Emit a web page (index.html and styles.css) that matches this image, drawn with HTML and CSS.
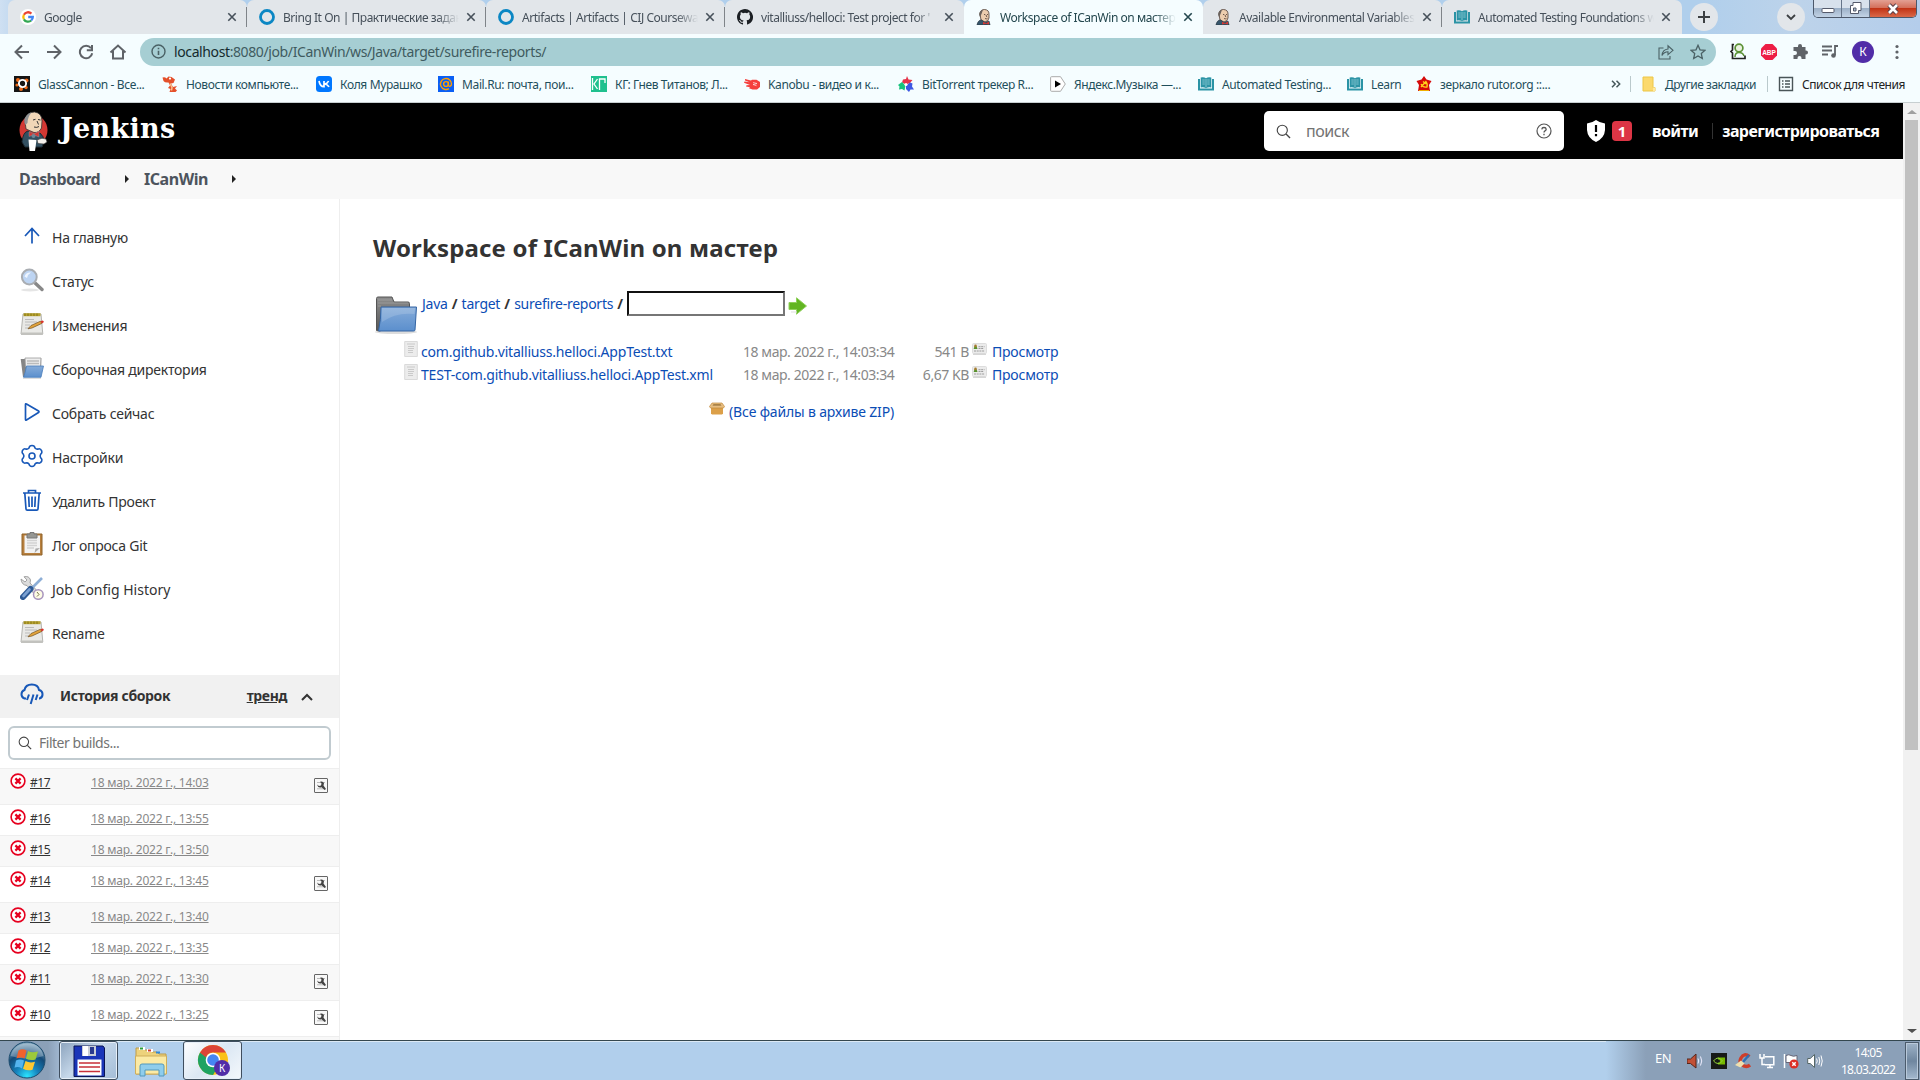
FILE: index.html
```html
<!DOCTYPE html>
<html lang="ru">
<head>
<meta charset="utf-8">
<title>Workspace of ICanWin on мастер</title>
<link rel="stylesheet" href="styles.css">
</head>
<body>
<svg class="defs" aria-hidden="true">
  <defs>
    <linearGradient id="gBlue" x1="0" y1="0" x2="0" y2="1"><stop offset="0" stop-color="#86acd9"/><stop offset="1" stop-color="#5b8fcd"/></linearGradient>
    <linearGradient id="gGrey" x1="0" y1="0" x2="0" y2="1"><stop offset="0" stop-color="#8e8e8e"/><stop offset="1" stop-color="#555"/></linearGradient>
    <radialGradient id="gOrb" cx=".5" cy=".95" r=".9"><stop offset="0" stop-color="#2be5ff"/><stop offset=".35" stop-color="#1583bd"/><stop offset=".7" stop-color="#134a78"/><stop offset="1" stop-color="#7fa4bd"/></radialGradient>
    <symbol id="google" viewBox="0 0 16 16"><circle cx="8" cy="8" r="8" fill="#fff"/><g fill="none" stroke-width="2.3"><path d="M11.4 4.6A4.8 4.8 0 0 0 3.9 5.7" stroke="#ea4335"/><path d="M3.9 5.7A4.8 4.8 0 0 0 3.9 10.3" stroke="#fbbc05"/><path d="M3.9 10.3A4.8 4.8 0 0 0 11.2 11.5" stroke="#34a853"/><path d="M11.2 11.5A4.8 4.8 0 0 0 12.8 8H8.2" stroke="#4285f4"/></g></symbol>
    <symbol id="ring" viewBox="0 0 16 16"><circle cx="8" cy="8" r="6.5" fill="none" stroke="#0b87c4" stroke-width="2.8"/></symbol>
    <symbol id="github" viewBox="0 0 16 16"><path fill="#1b1f23" d="M8 0C3.58 0 0 3.58 0 8c0 3.54 2.29 6.53 5.47 7.59.4.07.55-.17.55-.38v-1.49c-2.01.37-2.53-.49-2.69-.94-.09-.23-.48-.94-.82-1.13-.28-.15-.68-.52-.01-.53.63-.01 1.08.58 1.23.82.72 1.21 1.87.87 2.33.66.07-.52.28-.87.51-1.07-1.78-.2-3.64-.89-3.64-3.95 0-.87.31-1.59.82-2.15-.08-.2-.36-1.02.08-2.12 0 0 .67-.21 2.2.82a7.6 7.6 0 0 1 4 0c1.53-1.04 2.2-.82 2.2-.82.44 1.1.16 1.92.08 2.12.51.56.82 1.27.82 2.15 0 3.07-1.87 3.75-3.65 3.95.29.25.54.73.54 1.48v2.2c0 .21.15.46.55.38A8 8 0 0 0 8 0"/></symbol>
    <symbol id="butler" viewBox="0 0 16 16"><path d="M4 5Q4 .6 8.5 .5Q13 .8 13 5V9Q12.500 12 9 13L5 11Z" fill="#eccdae" stroke="#4c3a32" stroke-width=".8"/><path d="M4 8Q2.300 5 4 3Q5 1 7 .8L5.500 5Z" fill="#6a625c"/><path d="M8 5.500h1.300M11 5.500h1M9 9.500q1.500.8 2.500-.2M10 6l.8 2" stroke="#4c3a32" stroke-width=".8" fill="none"/><path d="M1 16Q2 11 5.500 11L9 13.500L13 12L14 16Z" fill="#36566b" stroke="#263540" stroke-width=".7"/><path d="M7 12.800l3 1.400 3-1.600v3l-3-.8-3 .8Z" fill="#d33833"/></symbol>
    <symbol id="book" viewBox="0 0 16 16"><path d="M0 3h2v9.500h12V3h2v11.500H0Z" fill="#2b93a5"/><path d="M2.700 1.500Q6 .8 8 2.200Q10 .8 13.300 1.500V11.500Q10 11 8 12.200Q6 11 2.700 11.500Z" fill="#2b93a5"/><path d="M8 3v8.500M4.300 4h2.500M4.300 6h2.500M4.300 8h2.500M9.200 4h2.500M9.200 6h2.500M9.200 8h2.500" stroke="#a9dbe2" stroke-width=".7"/></symbol>
    <symbol id="glass" viewBox="0 0 16 16"><path d="M0 0h16v16H0z" fill="#151515"/><g fill="#ef6a18"><circle cx="4" cy="4" r="2"/><circle cx="12.500" cy="4.500" r="2"/><circle cx="3" cy="9" r="1.600"/><circle cx="7" cy="13" r="2"/><circle cx="12" cy="11.500" r="1.700"/></g><circle cx="8.500" cy="7.500" r="3.600" fill="#151515" stroke="#fff" stroke-width="1.900"/></symbol>
    <symbol id="dragon" viewBox="0 0 16 16"><path d="M.5 1.500Q3 .5 4.500 2.500L6.500.5 9.500 1 13 3.500 11.500 7 9 7.500 11 11l4-1-2 2.500 2 2-1.500 1.500H7.500L8.500 13 6 12l2-2.500L6.500 6.500Q3 7 1.500 5Z" fill="#e4502b"/><path d="M8 7.500l2 4-.5 3" stroke="#f9c48e" stroke-width="1.500" fill="none"/><circle cx="8" cy="2.600" r="1.100" fill="#fff"/></symbol>
    <symbol id="vk" viewBox="0 0 16 16"><rect width="16" height="16" rx="3.500" fill="#07f"/><path d="M3 5Q4 10.500 8 10.700V5M12.600 5Q11.500 7.500 8.500 8Q11.500 8.200 13 10.900" stroke="#fff" stroke-width="1.700" fill="none"/></symbol>
    <symbol id="mailru" viewBox="0 0 16 16"><path d="M0 0h16v16H0z" fill="#0a5ff5"/><circle cx="8" cy="8" r="2.400" fill="none" stroke="#ff9e00" stroke-width="1.400"/><path d="M10.400 5.500V9q.2 1.500 1.500 1.400Q13.500 9.800 13.500 8A5.500 5.500 0 1 0 11 12.600" fill="none" stroke="#ff9e00" stroke-width="1.400"/></symbol>
    <symbol id="kg" viewBox="0 0 16 16"><path d="M0 0h16v16H0z" fill="#1fc08e"/><path d="M1.500 2v12M6.500 3 3 8l3.500 5M8.500 14V3H14v4" fill="none" stroke="#fff" stroke-width="1.300"/></symbol>
    <symbol id="kanobu" viewBox="0 0 16 16"><path d="M1 3l6 1.500 1-.8h4.500L16 6v5l-3 2.500H8.500L5 12.300l1-1.100-4-.7.500-1.300L6 9 0 6.800.5 5.500l5 .8L1 4.500Z" fill="#f5403d"/><path d="M9 6.500l4 1-4 1 3.500 1.200" stroke="#fff" stroke-width=".6" fill="none"/></symbol>
    <symbol id="rutracker" viewBox="0 0 16 16"><path d="M9 0l1.500 3.500 4 .5-2.500 3-4 1.500-4-2L5 3.500 8 3Z" fill="#e5344a"/><path d="M0 9l4-3 3.500 3.500-1 5L4 13l-3 .5.500-3Z" fill="#18c37d"/><path d="M8 9.500l4-3 2.500 1-.5 3 2 3-3.500 0-1.500 2.500-3-3Z" fill="#3d58e3"/><circle cx="8" cy="8.500" r="1.500" fill="#fff"/></symbol>
    <symbol id="ymusic" viewBox="0 0 16 16"><path d="M1.500.7h9L15.300 8l-4.800 7.300h-9Q.6 15.300.6 14.400V1.600Q.6.7 1.500.7Z" fill="#fff" stroke="#aaa"/><path d="M5 4.500 11 8l-6 3.500Z" fill="#000"/></symbol>
    <symbol id="rutor" viewBox="0 0 16 16"><path d="M8 0l2.500 3.500L15.500 5 13 9l1 6H2l1-6L.5 5l5-1.500Z" fill="#d50909"/><path d="M5 11l4.500-5M7 5.500l3 2.500M5 8q2 4 6 3 1-3-1.500-6" stroke="#ffd21b" stroke-width="1.300" fill="none"/><path d="M3 14.500h10" stroke="#f0b000"/></symbol>
    <symbol id="x" viewBox="0 0 10 10"><path d="M1.300 1.300l7.400 7.400M8.700 1.300 1.300 8.700" stroke="currentColor" stroke-width="1.600"/></symbol>
    <symbol id="lens" viewBox="0 0 16 16"><circle cx="6.700" cy="6.700" r="5.400" fill="none" stroke="currentColor" stroke-width="1.200"/><path d="M10.700 10.700 15 15" stroke="currentColor" stroke-width="1.400"/></symbol>
    <symbol id="notepad" viewBox="0 0 24 24"><path d="M3 2h18l1.800 20H1Z" fill="#e9e9e6" stroke="#b4b4b0"/><path d="M1 20.500h21.800V23H1Z" fill="#c2c2be"/><path d="M3.500 1.200h17v3h-17z" fill="#b7a332"/><path d="M5 1.500v2.500M8 1.500v2.500M11 1.500v2.500M14 1.500v2.500M17 1.500v2.500" stroke="#857410"/><path d="M5 7.500h9M5 10h12M5 13h5M5 16h4" stroke="#bbb"/><path d="M8 16.800l3-3.300 9.500-4.300 1.300 2.200-9.800 4.600Z" fill="#e3a43c" stroke="#71501f" stroke-width=".7"/><path d="M20.500 9.200l2-.8q1.600.3 1.200 1.800l-1.900 1.200Z" fill="#d9332b"/></symbol>
    <symbol id="folder" viewBox="0 0 24 24"><path d="M.7 3h4l.5-.8h16V10H21v11H3Z" fill="#858585"/><path d="M5 2h16l-.5 9h-15Z" fill="#eee" stroke="#999" stroke-width=".8"/><path d="M7 5h12M7 7.500h12" stroke="#bbb" stroke-width="1.300"/><path d="M6.500 10H23.500L21 21.300H3.500Q5.300 17 6.500 10Z" fill="url(#gBlue)" stroke="#4a7dbb" stroke-width=".8"/><path d="M3 22.500h18" stroke="#ddd"/></symbol>
    <symbol id="fail" viewBox="0 0 16 16"><circle cx="8" cy="8" r="6.900" fill="#fff" stroke="#e6001f" stroke-width="1.600"/><path d="M5.400 5.400l5.200 5.200M10.600 5.400l-5.200 5.200" stroke="#e6001f" stroke-width="2.200"/></symbol>
    <symbol id="wrench" viewBox="0 0 14 15"><rect x=".5" y=".5" width="13" height="14" rx=".5" fill="#f8f8f8" stroke="#666"/><path d="M3 4.500h8M3 10.800h8" stroke="#bbb"/><path d="M3 6.500l2 1.500 2-.5.500-2L6 3.700q3-1 4 1.500l-.5 2.300 2.500 3.500-1.300 1L7.500 9.200Q4 10.500 3 6.500Z" fill="#444"/></symbol>
    <symbol id="textfile" viewBox="0 0 14 16"><path d="M.7.500h12.600v15H.7Z" fill="#ececec" stroke="#dadada"/><path d="M3 3h8M4 5.500h6M4 7.500h6M4 9.500h5M4 11.500h5" stroke="#c6c6c6" stroke-width=".9"/></symbol>
    <symbol id="card" viewBox="0 0 15 12"><rect x=".5" y=".5" width="14" height="10" rx="1" fill="#ebebeb" stroke="#ddd"/><path d="M1 11.300h13" stroke="#ccc"/><path d="M1.700 6l.8-3h2l1 3Z" fill="#57912d"/><circle cx="3.500" cy="2.900" r="1.300" fill="#a57a2d"/><path d="M6.500 3.700h6M6.500 5.500h5M2 8h10.500" stroke="#888" stroke-width=".8" stroke-dasharray="2 .7"/></symbol>
  </defs>
</svg>

<div class="browser">
  <header class="tabs">
    <div class="tab"><svg class="fav"><use href="#google"/></svg><span class="label">Google</span><svg class="close"><use href="#x"/></svg></div>
    <div class="tab"><svg class="fav"><use href="#ring"/></svg><span class="label">Bring It On | Практические задан</span><svg class="close"><use href="#x"/></svg></div>
    <div class="tab"><svg class="fav"><use href="#ring"/></svg><span class="label">Artifacts | Artifacts | CIJ Coursewa</span><svg class="close"><use href="#x"/></svg></div>
    <div class="tab before-active"><svg class="fav"><use href="#github"/></svg><span class="label">vitalliuss/helloci: Test project for '</span><svg class="close"><use href="#x"/></svg></div>
    <div class="tab active"><svg class="fav"><use href="#butler"/></svg><span class="label">Workspace of ICanWin on мастер</span><svg class="close"><use href="#x"/></svg></div>
    <div class="tab after-active"><svg class="fav"><use href="#butler"/></svg><span class="label">Available Environmental Variables</span><svg class="close"><use href="#x"/></svg></div>
    <div class="tab last"><svg class="fav"><use href="#book"/></svg><span class="label">Automated Testing Foundations w</span><svg class="close"><use href="#x"/></svg></div>
    <div class="strip">
      <span class="round"><svg width="14" height="14" viewBox="0 0 14 14"><path d="M7 1v12M1 7h12" stroke="#3c4043" stroke-width="2"/></svg></span>
      <span class="round search"><svg width="10" height="7" viewBox="0 0 10 7"><path d="M1 1l4 4 4-4" fill="none" stroke="#3c4043" stroke-width="1.800"/></svg></span>
      <div class="winctl">
        <span><svg width="14" height="18" viewBox="0 0 14 18"><rect x="1" y="8.500" width="12" height="4" rx="1" fill="#fff" stroke="#555a6b"/></svg></span>
        <span><svg width="13" height="18" viewBox="0 0 13 18"><path d="M4 2.500h8v8H9.500v3h-8v-8H4Z" fill="#fff" stroke="#555a6b"/><path d="M4.500 8h2.500v3H4.500Z" fill="#a9bccf" stroke="#555a6b"/></svg></span>
        <span class="kill"><svg width="14" height="16" viewBox="0 0 14 16"><path d="M3 4l8 8M11 4l-8 8" stroke="#5b4048" stroke-width="4.600"/><path d="M3 4l8 8M11 4l-8 8" stroke="#fff" stroke-width="2.600"/></svg></span>
      </div>
    </div>
  </header>

  <div class="toolbar">
    <div class="nav">
      <svg width="16" height="16" viewBox="0 0 16 16"><path d="M15 8H2.500M8 1.500 1.500 8 8 14.500" /></svg>
      <svg width="16" height="16" viewBox="0 0 16 16"><path d="M1 8h12.500M8 1.500 14.500 8 8 14.500"/></svg>
      <svg width="16" height="16" viewBox="0 0 16 16"><path d="M13 4.200A6.200 6.200 0 1 0 14.200 9.200M14 1v5.200H8.800"/></svg>
      <svg class="home" width="18" height="16" viewBox="0 0 18 16"><path d="M1.500 8.500 9 1.500l7.500 7M4 7v7.500h10V7"/></svg>
    </div>
    <div class="omnibox">
      <svg width="15" height="15" viewBox="0 0 15 15"><circle cx="7.500" cy="7.500" r="6.500" fill="none" stroke="#4a6165" stroke-width="1.400"/><path d="M7.500 6.700v4.300M7.500 3.700v1.600" stroke="#4a6165" stroke-width="1.600"/></svg>
      <span class="url"><b>localhost</b>:8080/job/ICanWin/ws/Java/target/surefire-reports/</span>
      <svg width="16" height="16" viewBox="0 0 16 16"><path d="M5.500 4H1v11h11v-3M4 11.500q.5-6 6-6.500V1.800L15 6.300l-5 4.300V7.800Q6 8 4 11.500Z" fill="none" stroke="#4a6165" stroke-width="1.100"/></svg>
      <svg width="16" height="16" viewBox="0 0 16 16"><path d="M8 1.300l2 4.500 5 .5-3.700 3.300 1 4.900L8 12l-4.300 2.500 1-4.900L1 6.300l5-.5Z" fill="none" stroke="#4a6165" stroke-width="1.300"/></svg>
    </div>
    <div class="exts">
      <svg width="16" height="17" viewBox="0 0 16 17"><path d="M4 1.500H2.500v5.500L1 8.500l1.500 1.500v5.500H15v-3" fill="none" stroke="#222" stroke-width="1.700"/><circle cx="9" cy="5" r="3.900" fill="#e9f2df" stroke="#5b9136" stroke-width="1.700"/><path d="M5 14q0-4.500 4-4.500t5 3.500" fill="none" stroke="#5b9136" stroke-width="1.500"/></svg>
      <svg width="18" height="18" viewBox="0 0 18 18"><path d="M5.500 1h7L17 5.500v7L12.500 17h-7L1 12.500v-7Z" fill="#ed1e45"/><text x="9" y="11.500" text-anchor="middle" class="abp">ABP</text></svg>
      <svg width="16" height="16" viewBox="0 0 16 16"><path d="M6 2a2 2 0 0 1 4 0v1h3.500v3.500h.5a2 2 0 0 1 0 4h-.5V15H9.500v-1a2 2 0 0 0-4 0v1H1.500v-4H3a2 2 0 0 0 0-4H1.500V3H6Z" fill="#5f6368"/></svg>
      <svg width="16" height="16" viewBox="0 0 16 16"><path d="M0 2.500h10M0 6.500h10M0 10.500h6M16 2h-3v9" fill="none" stroke="#5f6368" stroke-width="1.800"/><circle cx="11.500" cy="11.500" r="2.300" fill="#5f6368"/></svg>
      <span class="avatar">К</span>
      <svg width="4" height="16" viewBox="0 0 4 16"><circle cx="2" cy="2.500" r="1.600" fill="#5f6368"/><circle cx="2" cy="8" r="1.600" fill="#5f6368"/><circle cx="2" cy="13.500" r="1.600" fill="#5f6368"/></svg>
    </div>
  </div>

  <nav class="bookmarks">
    <a><svg><use href="#glass"/></svg>GlassCannon - Все...</a>
    <a><svg><use href="#dragon"/></svg>Новости компьюте...</a>
    <a><svg><use href="#vk"/></svg>Коля Мурашко</a>
    <a><svg><use href="#mailru"/></svg>Mail.Ru: почта, пои...</a>
    <a><svg><use href="#kg"/></svg>КГ: Гнев Титанов; Л...</a>
    <a><svg><use href="#kanobu"/></svg>Kanobu - видео и к...</a>
    <a><svg><use href="#rutracker"/></svg>BitTorrent трекер R...</a>
    <a><svg><use href="#ymusic"/></svg>Яндекс.Музыка —...</a>
    <a><svg><use href="#book"/></svg>Automated Testing...</a>
    <a><svg><use href="#book"/></svg>Learn</a>
    <a><svg><use href="#rutor"/></svg>зеркало rutor.org ::...</a>
    <a class="more"><svg viewBox="0 0 10 8"><path d="M1 .8 4.200 4 1 7.200M5.500.8 8.700 4 5.500 7.200" fill="none" stroke="#46585b" stroke-width="1.500"/></svg></a>
    <a class="rule other"><svg viewBox="0 0 16 16"><path d="M2 1h10v10.500h2V15H2Z" fill="#fbd96d" stroke="#edc647"/><path d="M12 11.500h2V15h-2z" fill="#ffe89b"/></svg>Другие закладки</a>
    <a class="rule reading"><svg viewBox="0 0 16 16"><path d="M1.500 1.500h13v13h-13Z" fill="none" stroke="#4a5558" stroke-width="1.400"/><path d="M4 5h1.500M4 8h1.500M4 11h1.500M7 5h5M7 8h5M7 11h5" stroke="#4a5558" stroke-width="1.400"/></svg>Список для чтения</a>
  </nav>

  <div class="viewport">
    <div class="page">
      <header class="jenkins">
        <svg class="mascot" width="30" height="40" viewBox="0 0 30 40"><ellipse cx="14.500" cy="19" rx="14" ry="15" fill="#d33833"/><path d="M6 10Q7 1 15.500 1Q23 2 23 10L22.500 17Q20 22 15 21.500L7 18Z" fill="#f0d6b7" stroke="#333" stroke-width=".8"/><path d="M6.500 14Q3.500 9 7.500 4.500Q9.500 2 12.500 1.500Q8.500 6 8.500 12Z" fill="#8f9395"/><path d="M14 9l2.500-.7M19 8.500l2.500.5M15 16q3 1 5-.5M18 10l1.500 3.500" stroke="#333" fill="none"/><path d="M3 31Q4 21 9 20l6 4 6-2q4 3 4 9l-2 5H6Z" fill="#335061" stroke="#1d2a33"/><path d="M10 20.500l5 2.500 5-3v6l-5-2-5 1.500Z" fill="#d33833" stroke="#81b0c4" stroke-width=".4"/><circle cx="14.500" cy="25" r="2" fill="#6d8797"/><path d="M9.500 28.500l8 .5-1.500 11h-5.500Z" fill="#fff"/><path d="M18 29q5-3 9-1l1 3-3 2-6-.5Z" fill="#f4f0eb" stroke="#333" stroke-width=".6"/></svg>
        <span class="wordmark">Jenkins</span>
        <div class="searchbox"><svg width="15" height="15"><use href="#lens"/></svg><span>поиск</span><svg width="16" height="16" viewBox="0 0 16 16"><circle cx="8" cy="8" r="7" fill="none" stroke="#555" stroke-width="1.200"/><path d="M5.800 6.400Q6 4.500 8 4.500T10.200 6.300Q10.200 7.300 9 7.900Q8 8.400 8 9.600M8 10.800v1.400" fill="none" stroke="#555" stroke-width="1.300"/></svg></div>
        <svg class="shield" width="18" height="22" viewBox="0 0 18 22"><path d="M9 0Q13 3 18 3.500V10Q17.500 18 9 22Q.5 18 0 10V3.500Q5 3 9 0Z" fill="#fff"/><path d="M9 5v7M9 14v2.200" stroke="#000" stroke-width="2.200"/></svg>
        <span class="badge">1</span>
        <a class="login">войти</a><a class="signup">зарегистрироваться</a>
      </header>
      <div class="crumbs"><a>Dashboard</a><i></i><a class="job">ICanWin</a><i></i></div>

      <div class="body">
        <aside class="side">
          <ul class="tasks">
            <li><svg viewBox="0 0 24 24"><path d="M12 19.500V5M5 12l7-7.500 7 7.500" fill="none" stroke="#1858b8" stroke-width="1.700"/></svg>На главную</li>
            <li><svg viewBox="0 0 24 24"><ellipse cx="10" cy="22" rx="9" ry="1.500" fill="#e5e5e5"/><path d="M14 14l8 7.500" stroke="#888" stroke-width="3.400" stroke-linecap="round"/><circle cx="9.300" cy="9" r="7.400" fill="#bdd4f2" stroke="#a9adb2" stroke-width="2"/><path d="M4.500 8.500Q6 4 11 4.500Q8 6 7 10Z" fill="#eef5ff"/></svg>Статус</li>
            <li><svg viewBox="0 0 24 24"><use href="#notepad"/></svg>Изменения</li>
            <li><svg viewBox="0 0 24 24"><use href="#folder"/></svg>Сборочная директория</li>
            <li><svg viewBox="0 0 24 24"><path d="M5.500 4.500Q5.500 3.500 6.500 4L18.500 11q1 .8 0 1.500L6.500 20q-1 .5-1-.5Z" fill="none" stroke="#1858b8" stroke-width="1.700"/></svg>Собрать сейчас</li>
            <li><svg viewBox="0 0 24 24"><path d="M12 1.500c2.200 0 2.800 1 3.200 2.800 1 1 2 1 3.300.6 1.700-.5 2.700.8 3.300 2.200.5 1.400 0 2.300-1.200 3.300-.7 1.100-.7 2.100 0 3.200 1.200 1 1.700 1.900 1.200 3.300-.6 1.400-1.600 2.700-3.300 2.200-1.300-.4-2.300-.4-3.300.6-.4 1.800-1 2.800-3.200 2.800s-2.800-1-3.200-2.800c-1-1-2-1-3.300-.6-1.700.5-2.700-.8-3.300-2.200-.5-1.400 0-2.300 1.200-3.300.7-1.100.7-2.100 0-3.200-1.200-1-1.700-1.900-1.200-3.300.6-1.400 1.600-2.700 3.300-2.200 1.300.4 2.300.4 3.300-.6.400-1.800 1-2.800 3.200-2.800Z" fill="none" stroke="#1858b8" stroke-width="1.600"/><circle cx="12" cy="12" r="3" fill="none" stroke="#1858b8" stroke-width="1.600"/></svg>Настройки</li>
            <li><svg viewBox="0 0 24 24"><path d="M3 5h18M4.800 5l1.200 16q.1 1.200 1.200 1.200h9.600q1.100 0 1.200-1.200L19.200 5M8.500 5V2.500h7V5M8.700 8.500l.5 10.500M12 8.500V19M15.300 8.500l-.5 10.500" fill="none" stroke="#1858b8" stroke-width="1.700"/></svg>Удалить Проект</li>
            <li><svg viewBox="0 0 24 24"><path d="M2 2h20v21H2Z" fill="#b8803e" stroke="#8f6229"/><path d="M4.500 3.500h15.500V21H4.500Z" fill="#f3f3f3"/><path d="M7 8.500h10M7 11h10M7 13.500h10M7 16h7" stroke="#d2d2d2" stroke-width="1.500"/><path d="M14.500 21l1-4.500 4.500-.5Z" fill="#aaa"/><path d="M7 2h3V.5h4V2h3v4H7Z" fill="#969793" stroke="#777"/></svg>Лог опроса Git</li>
            <li class="tight"><svg viewBox="0 0 24 24"><path d="M1 3l4 3 2-2L4 .8Q9-.5 10.500 4L10 7l9 10-3 3L7 9.500Q1.500 9 1 3Z" fill="#ddd" stroke="#999" stroke-width=".9"/><path d="M22 2l-10 10" stroke="#8daed6" stroke-width="2.600"/><path d="M10.500 13 3 21" stroke="#2e5a96" stroke-width="6" stroke-linecap="round"/><path d="M9.500 13.500 3.500 20" stroke="#7aa0d2" stroke-width="2.600" stroke-linecap="round"/><circle cx="18.300" cy="18.500" r="4.800" fill="#fdfbe4" stroke="#a794bd" stroke-width="1.500"/><path d="M17 16l2 2.500-2 2" fill="none" stroke="#76744a"/></svg>Job Config History</li>
            <li><svg viewBox="0 0 24 24"><use href="#notepad"/></svg>Rename</li>
          </ul>
          <div class="history-head"><svg width="26" height="24" viewBox="0 0 26 24"><path d="M7 15.500H5.500A4.500 4.500 0 0 1 5.500 7Q6.500 1.500 12.800 1.500T20 7a4.400 4.400 0 0 1 .5 8.500H20M10 11.500l-2 5.500M14.500 11.500 11.700 21M18.500 11.500l-1.800 5.500" fill="none" stroke="#1858b8" stroke-width="2"/></svg><b>История сборок</b><a>тренд</a><svg width="12" height="8" viewBox="0 0 12 8"><path d="M1 7l5-5 5 5" fill="none" stroke="#333" stroke-width="2"/></svg></div>
          <div class="filter"><svg width="14" height="14"><use href="#lens"/></svg>Filter builds...</div>
          <div class="build tall"><svg><use href="#fail"/></svg><a>#17</a><a class="when">18 мар. 2022 г., 14:03</a><svg class="cfg"><use href="#wrench"/></svg></div>
          <div class="build"><svg><use href="#fail"/></svg><a>#16</a><a class="when">18 мар. 2022 г., 13:55</a></div>
          <div class="build"><svg><use href="#fail"/></svg><a>#15</a><a class="when">18 мар. 2022 г., 13:50</a></div>
          <div class="build tall"><svg><use href="#fail"/></svg><a>#14</a><a class="when">18 мар. 2022 г., 13:45</a><svg class="cfg"><use href="#wrench"/></svg></div>
          <div class="build"><svg><use href="#fail"/></svg><a>#13</a><a class="when">18 мар. 2022 г., 13:40</a></div>
          <div class="build"><svg><use href="#fail"/></svg><a>#12</a><a class="when">18 мар. 2022 г., 13:35</a></div>
          <div class="build tall"><svg><use href="#fail"/></svg><a>#11</a><a class="when">18 мар. 2022 г., 13:30</a><svg class="cfg"><use href="#wrench"/></svg></div>
          <div class="build tall"><svg><use href="#fail"/></svg><a>#10</a><a class="when">18 мар. 2022 г., 13:25</a><svg class="cfg"><use href="#wrench"/></svg></div>
          <div class="build"></div>
        </aside>

        <main class="main">
          <h1>Workspace of ICanWin on мастер</h1>
          <div class="path">
            <svg width="44" height="40" viewBox="0 0 44 40"><ellipse cx="22" cy="37" rx="21" ry="2" fill="#ddd"/><path d="M2.500 35.500V3.500Q2.500 2 4 2H18l2 5h14q1.500 0 1.500 1.500V20L6 36Z" fill="url(#gGrey)" stroke="#555"/><path d="M4 5h14M4 8h30M4 11h3" stroke="#a3a3a3" stroke-width=".7"/><path d="M7 12H42.500L41 35q-.1 1-1.300 1H4.500Q7 25 7 12Z" fill="url(#gBlue)" stroke="#3465a4"/><path d="M8 13h33l-.5 6Q22 17 8 27Z" fill="#fff" opacity=".16"/></svg>
            <a class="java">Java</a><i>/</i><a>target</a><i>/</i><a>surefire-reports</a><i>/</i>
            <span class="mask"></span>
            <svg class="go" width="20" height="18" viewBox="0 0 20 18"><path d="M1 5.500h7.500V.8L18.500 9l-10 8.200v-4.700H1Z" fill="#62b522" stroke="#8fd05b"/><path d="M3 15h6" stroke="#ddd"/></svg>
          </div>
          <div class="files">
            <svg width="14" height="16"><use href="#textfile"/></svg><a class="name">com.github.vitalliuss.helloci.AppTest.txt</a><span class="date">18 мар. 2022 г., 14:03:34</span><span class="size">541 B</span><svg width="15" height="12"><use href="#card"/></svg><a>Просмотр</a>
            <svg width="14" height="16"><use href="#textfile"/></svg><a class="name">TEST-com.github.vitalliuss.helloci.AppTest.xml</a><span class="date">18 мар. 2022 г., 14:03:34</span><span class="size">6,67 KB</span><svg width="15" height="12"><use href="#card"/></svg><a>Просмотр</a>
          </div>
          <div class="zip"><svg width="16" height="13" viewBox="0 0 16 13"><path d="M2 5h12v6.500l-1 1H3l-1-1Z" fill="#dca049"/><path d="M3 1h10l2.500 3.500-1 1.500h-13L.5 4.500Z" fill="#e7bd80" stroke="#c08a3d" stroke-width=".7"/><path d="M4.500 2h7l1 1.800h-9Z" fill="#a98348"/></svg><a>(Все файлы в архиве ZIP)</a></div>
        </main>
      </div>
    </div>
    <div class="scroll"><i class="up"></i><b></b><i class="down"></i></div>
  </div>

  <footer class="taskbar">
    <span class="start"><svg width="38" height="38" viewBox="0 0 38 38"><circle cx="19" cy="19" r="18" fill="url(#gOrb)" stroke="#1d4c6e"/><path d="M2.500 15Q6 3 19 2.500T35.500 15Q20 20 2.500 15Z" fill="#fff" opacity=".28"/><path d="M10.500 9.500q4-2.500 8 0l-2 8q-4-2-8 0Z" fill="#f0622d"/><path d="M20 10q4 2.300 10 .5l-2.500 8q-5 1.500-9.500-.8Z" fill="#9cc93b"/><path d="M8 19.500q4-2 8 0l-2 8q-4-2.500-7.500-.8Z" fill="#55b4ee"/><path d="M17.500 20q4 2.300 9.500.8l-2.500 8q-5 1.500-9.500-1Z" fill="#fdc832"/></svg></span>
    <span class="app"><svg width="32" height="32" viewBox="0 0 32 32"><path d="M1 1h29l1.500 2v28.500H1Z" fill="#1a35b8" stroke="#0a1454"/><path d="M9 1h14v10H9Z" fill="#c9cdd6"/><path d="M10 1h5v10h-5z" fill="#fff"/><path d="M17 2h4v7h-4z" fill="#2a3a8e"/><path d="M4.500 14.500h24v16h-24Z" fill="#fff"/><path d="M6 18h21M6 22h21M6 26.500h21" stroke="#c8313a" stroke-width="1.300"/></svg></span>
    <span class="app plain"><svg width="34" height="32" viewBox="0 0 34 32"><path d="M2 3h7l2 2h5l2 2h5l2 2h7v20H2Z" fill="#edd27c" stroke="#bd9b48"/><path d="M5 2h6v3H5zM13 4h6v3h-6z" fill="#fff"/><path d="M6 2.500h3v2H6z" fill="#2a9e3a"/><path d="M14 4.500h3v2h-3z" fill="#d33c2c"/><path d="M22 6.500h4v2h-4z" fill="#3089d8"/><path d="M1.500 11h31v18h-31Z" fill="#fbeaa5" stroke="#cfae5a"/><path d="M6 31V21q0-2 2-2h20q2 0 2 2v10h-5v-6H11v6Z" fill="#8fcdec" stroke="#5399bd"/></svg></span>
    <span class="app chrome"><svg width="34" height="34" viewBox="0 0 34 34"><circle cx="16" cy="16" r="15" fill="#fbc116"/><path d="M3 8.500A15 15 0 0 0 16 31l6.500-11.300L16 16Z" fill="#1ea362"/><path d="M3 8.500A15 15 0 0 1 29 8.500H16a7.500 7.500 0 0 0-7 5Z" fill="#dc4437"/><circle cx="16" cy="16" r="7.300" fill="#fff"/><circle cx="16" cy="16" r="5.800" fill="#4586f3"/><circle cx="25" cy="24" r="8" fill="#512da8"/><text x="25" y="28" text-anchor="middle" class="kbadge">К</text></svg></span>
    <div class="tray">
      <span class="lang">EN</span>
      <svg viewBox="0 0 16 16"><path d="M0 6h3.500L9 1v14L3.500 10.500H0Z" fill="#c25036" stroke="#57261b"/><path d="M11 5.500q1.500 2.500 0 5M13.500 3.500q2.500 4.500 0 9" fill="none" stroke="#eef"/></svg>
      <svg viewBox="0 0 16 16"><path d="M0 0h16v16H0Z" fill="#171a17"/><path d="M7 4.500h7v7H7Z" fill="#76b900"/><path d="M2.500 8q4.500-6 9 0-4.500 5-9 0Z" fill="none" stroke="#92d13b"/><circle cx="7.500" cy="8" r="1.500" fill="#171a17"/></svg>
      <svg viewBox="0 0 16 16"><path d="M14.500 3.500Q9-.5 6 5T9.500 13.200q3 .8 5.500-1.200" fill="none" stroke="#cf3d29" stroke-width="3.400"/><path d="M14 2 8 9" stroke="#2f6fb5" stroke-width="2.400"/><path d="M6 7.500l3.500 3L5.500 14.500 0 12Z" fill="#f0dfae"/></svg>
      <svg viewBox="0 0 16 16"><path d="M6 3.700h8.800v8H6M8 14.500h6M11 11.500v3" fill="none" stroke="#fff" stroke-width="1.500"/><path d="M1 1v4h4V1M3 5v6.500h3" fill="none" stroke="#fff" stroke-width="1.500"/></svg>
      <svg viewBox="0 0 16 16"><path d="M1.500 1v14" stroke="#fff" stroke-width="1.500"/><path d="M3 2.500q3-1.500 5 0t6 0v7H3Z" fill="#fff" stroke="#667"/><circle cx="11" cy="11" r="4.600" fill="#dc2e25"/><path d="M9.300 9.300l3.400 3.400M12.700 9.300l-3.400 3.400" stroke="#fff" stroke-width="1.500"/></svg>
      <svg viewBox="0 0 16 16"><path d="M.7 5.500h2.500L7.500 1.500v13L3.200 10.500H.7Z" fill="#fff" stroke="#566"/><path d="M9.500 5.500q1.500 2.500 0 5M11.800 4q2 4 0 8M14 2.500q2.500 5.500 0 11" fill="none" stroke="#fff"/></svg>
      <div class="clock"><span>14:05</span><span>18.03.2022</span></div>
      <span class="peek"></span>
    </div>
  </footer>
</div>
</body>
</html>
```
FILE: styles.css
```css
* { box-sizing: border-box; }
body { margin: 0; font-family: "Noto Sans", "Open Sans", sans-serif; font-size: 14px; color: #333; overflow: hidden; }
.defs { position: absolute; width: 0; height: 0; }
svg { flex: none; display: block; }
.browser { width: 1920px; height: 1080px; display: flex; flex-direction: column; background: #f5fdff; }

/* tab strip */
.tabs { height: 34px; flex: none; display: flex; background: linear-gradient(90deg, #cfe0f2 0, #b0cfed 30px, #b0cfec 1700px, #bdd3ea 1800px, #b4cdeb 1920px); padding-left: 8px; }
.tab { width: 239px; height: 34px; flex: none; display: flex; align-items: center; padding-left: 12px; background: #e2e6ea; border-radius: 7px 7px 0 0; position: relative; font-size: 12px; letter-spacing: -.46px; color: #46505a; }
.tab:not(.before-active):not(.active):not(.last)::after { content: ""; position: absolute; right: 0; top: 7px; width: 1px; height: 20px; background: #7f8489; }
.tab.last { width: 240px; }
.tab.active { background: #f5fdff; color: #24474e; }
.fav { width: 16px; height: 16px; }
.label { width: 180px; margin-left: 8px; white-space: nowrap; -webkit-mask-image: linear-gradient(90deg, #000 154px, transparent 176px); mask-image: linear-gradient(90deg, #000 154px, transparent 176px); }
.close { width: 10px; height: 10px; margin-left: 3px; }
.strip { flex: 1; display: flex; align-items: center; padding-left: 8px; }
.round { width: 28px; height: 28px; border-radius: 50%; background: #e2e6ea; display: flex; align-items: center; justify-content: center; }
.round.search { margin-left: 59px; }
.winctl { display: flex; align-self: flex-start; width: 104px; height: 18px; margin-left: 8px; border: 1px solid #4c586a; border-top: 0; border-radius: 0 0 5px 5px; overflow: hidden; }
.winctl span { width: 28px; display: flex; align-items: center; justify-content: center; border-right: 1px solid #66758a; background: linear-gradient(#d8e1ec 0 45%, #9db1c8 50%, #c3d3e5); }
.winctl .kill { flex: 1; border: 0; background: linear-gradient(#e3a093 0, #d4705b 45%, #c23416 50%, #da6848); }

/* toolbar */
.toolbar { height: 35px; flex: none; display: flex; align-items: center; padding: 0 20px 0 14px; }
.nav { display: flex; gap: 16px; width: 126px; }
.nav path { fill: none; stroke: #5f6368; stroke-width: 2; }
.nav .home { margin-left: -1px; }
.omnibox { width: 1576px; height: 28px; border-radius: 14px; background: #a6ced3; display: flex; align-items: center; padding: 0 10px 0 11px; gap: 16px; }
.url { flex: 1; margin-left: -8px; letter-spacing: -.39px; color: #3f5b60; }
.url b { font-weight: 400; color: #142a2d; }
.exts { flex: 1; display: flex; align-items: center; gap: 14px; padding-left: 14px; }
.avatar { width: 22px; height: 22px; border-radius: 50%; background: #512da8; color: #fff; font-size: 12px; line-height: 22px; text-align: center; margin-right: 7px; }
.abp { font: 700 6.5px "Liberation Sans", sans-serif; fill: #fff; }

/* bookmarks */
.bookmarks { height: 34px; flex: none; display: grid; grid-template-columns: 148px 154px 122px 153px 153px 154px 152px 148px 149px 69px 195px 19px 137px 1fr; align-items: center; padding: 0 0 3px 14px; border-bottom: 1px solid #c7cfd1; font-size: 12px; letter-spacing: -.37px; color: #1f4f5c; white-space: nowrap; }
.bookmarks a { display: flex; align-items: center; gap: 8px; }
.bookmarks svg { width: 16px; height: 16px; }
.bookmarks .more svg { width: 10px; height: 8px; }
.bookmarks .rule { border-left: 1px solid #bac9cc; height: 16px; padding-left: 10px; }
.bookmarks .reading { color: #222; letter-spacing: -.43px; }
.bookmarks .other { letter-spacing: -.46px; }

/* page */
.viewport { flex: 1; min-height: 0; display: flex; }
.page { width: 1903px; display: flex; flex-direction: column; background: #fff; overflow: hidden; }
.jenkins { height: 56px; flex: none; background: #000; display: flex; align-items: center; color: #fff; padding-left: 19px; }
.wordmark { font: 700 27px/40px "DejaVu Serif", "Liberation Serif", serif; letter-spacing: .3px; margin-left: 11px; width: 1204px; margin-top: -5px; }
.searchbox { width: 300px; height: 40px; border-radius: 5px; background: #fff; color: #737373; display: flex; align-items: center; padding: 0 12px; font-size: 16px; letter-spacing: -.5px; }
.searchbox svg:first-child { color: #444; }
.searchbox span { flex: 1; margin-left: 15px; }
.shield { margin-left: 23px; }
.badge { width: 20px; height: 20px; margin-left: 7px; border-radius: 4px; background: #dc3545; font: 700 15px/20px "Noto Sans", sans-serif; text-align: center; }
.login, .signup { font-weight: 700; font-size: 16px; letter-spacing: -.58px; line-height: 20px; }
.login { margin-left: 20px; }
.signup { margin-left: 14px; padding-left: 10px; background: linear-gradient(#333, #333) 0 50% / 1px 16px no-repeat; }
.crumbs { height: 40px; flex: none; background: #f8f8f8; display: flex; align-items: center; padding-left: 19px; font-size: 16px; font-weight: 700; letter-spacing: -.58px; color: #4d545d; }
.crumbs a { width: 106px; }
.crumbs .job { width: 70px; margin-left: 15px; letter-spacing: -.44px; }
.crumbs i { border: 4px solid transparent; border-left-color: #222; border-right: 0; }
.crumbs .job + i { margin-left: 18px; }
.body { flex: 1; min-height: 0; display: flex; }

/* side panel */
.side { width: 340px; border-right: 1px solid #eee; overflow: hidden; flex: none; }
.tasks { list-style: none; margin: 0; padding: 16px 0 20px 20px; }
.tasks li { height: 44px; display: flex; align-items: center; gap: 8px; letter-spacing: -.24px; }
.tasks li svg { width: 24px; height: 24px; margin-top: -2px; }
.tasks .tight { letter-spacing: 0; }
.history-head { height: 43px; background: #f1f1f1; display: flex; align-items: center; padding: 0 26px 3px 19px; letter-spacing: -.38px; }
.history-head b { flex: 1; margin-left: 15px; }
.history-head a { font-weight: 700; text-decoration: underline; margin-right: 14px; }
.history-head svg:last-child { margin-top: 3px; }
.filter { margin: 8px 8px; height: 34px; border: 2px solid #c1cbd0; border-radius: 6px; display: flex; align-items: center; padding: 0 0 1px 8px; gap: 7px; color: #737373; letter-spacing: -.48px; }
.filter svg { color: #444; }
.build { height: 31px; border-top: 1px solid #eee; display: flex; padding: 4px 0 0 10px; font-size: 12px; line-height: 20px; letter-spacing: -.4px; }
.build:nth-of-type(odd) { background: #f8f8f8; }
.build.tall { height: 36px; }
.build svg { width: 16px; height: 16px; }
.build a { text-decoration: underline; width: 57px; margin-left: 4px; }
.build .when { color: #888; width: 223px; letter-spacing: -.2px; }
.build svg.cfg { width: 14px; height: 15px; margin: 5px 0 0 0; }

/* workspace */
.main { padding: 31px 0 0 33px; flex: 1; }
h1 { margin: 0; font-size: 24px; line-height: 35px; letter-spacing: .16px; white-space: nowrap; }
.main a { color: #0b4db5; }
.path { display: flex; align-items: flex-start; margin: 26px 0 0 1px; height: 49px; line-height: 26px; letter-spacing: -.26px; }
.path svg:first-child { margin: 4px 3px 0 0; }
.path .java { margin-left: 1px; }
.path i { font-style: normal; font-weight: 700; width: 14px; text-align: center; letter-spacing: 0; }
.mask { width: 158px; height: 25px; border: 2px solid #767676; border-top-color: #111; border-left-color: #111; background: #fff; }
.go { margin: 6px 0 0 3px; }
.files { display: grid; grid-template-columns: 14px 325px 151px 75px 17px 70px; grid-auto-rows: 23px; align-items: center; padding-left: 31px; white-space: nowrap; letter-spacing: -.2px; }
.files .name { padding-left: 3px; }
.files svg { margin-top: -5px; }
.files svg[width="15"] { margin-left: 3px; }
.files .date, .files .size { color: #888; letter-spacing: -.43px; }
.files .size { text-align: right; }
.files .size + svg + a { padding-left: 6px; }
.zip { display: flex; align-items: center; justify-content: flex-end; width: 521px; margin-top: 16px; gap: 4px; letter-spacing: -.16px; }
.zip svg { margin-top: -6px; }

/* scrollbar */
.scroll { width: 17px; background: #f1f1f1; display: flex; flex-direction: column; align-items: center; }
.scroll b { width: 13px; height: 630px; background: #c1c1c1; margin-top: 6px; }
.scroll i { border: 5px solid transparent; }
.scroll .up { border-bottom: 4px solid #a0a0a0; border-top: 0; margin-top: 7px; }
.scroll .down { border-top: 4px solid #505050; border-bottom: 0; margin: auto 0 7px; }

/* taskbar */
.taskbar { height: 40px; flex: none; display: flex; background: #b1cfec; border-top: 1px solid #34474f; box-shadow: inset 0 1px #dbe9f5; letter-spacing: -.7px; }
.start { width: 59px; padding-left: 8px; background: linear-gradient(90deg, #8ba0b8 48px, #9fb6cf); }
.app { width: 59px; margin-right: 3px; border: 1px solid #3f4e5e; border-radius: 3px; display: flex; align-items: center; justify-content: center; background: linear-gradient(135deg, #8ba3bd, #c6d8ea 45%, #a4bdd7); box-shadow: inset 0 0 0 1px #e6eff8; }
.app.plain { border: 0; background: none; box-shadow: none; }
.app.chrome { background: linear-gradient(135deg, #fff, #dbe7f3 50%, #f4f8fc); padding-left: 2px; }
.kbadge { font: 10px "Noto Sans", sans-serif; fill: #fff; letter-spacing: 0; }
.tray { margin-left: auto; width: 314px; display: flex; align-items: center; color: #fff; background: linear-gradient(90deg, #b1cfec, #8ba0b8 40px); }
.lang { width: 33px; margin: -5px 0 0 49px; font-size: 13px; letter-spacing: -.6px; }
.tray svg { width: 16px; height: 16px; margin-right: 8px; }
.clock { width: 78px; text-align: center; font-size: 12px; line-height: 17px; display: flex; flex-direction: column; }
.peek { width: 14px; height: 38px; margin-left: auto; margin-right: 1px; border: 1px solid #4b5b6c; background: linear-gradient(#9fb3c8, #6f869f 50%, #a5b9ce); box-shadow: inset 0 0 0 1px #b9c9da; }
```
